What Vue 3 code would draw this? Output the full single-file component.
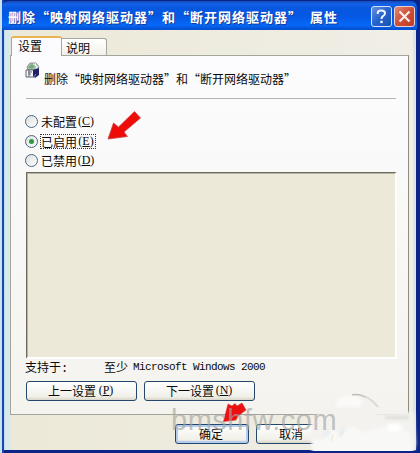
<script setup>
import { ref } from 'vue'

const selected = ref('E')
const options = [
  { label: '未配置', key: 'C' },
  { label: '已启用', key: 'E' },
  { label: '已禁用', key: 'D' },
]
</script>

<template>
  <div class="window">
    <header class="titlebar">
      <h1 class="title">删除“映射网络驱动器”和“断开网络驱动器”<span class="gap"></span>属性</h1>
      <button class="cap help" aria-label="Help">
        <svg width="21" height="21" viewBox="0 0 21 21"><path d="M6.8 8V6.2Q7 4.5 10.2 4.5Q14 4.5 14 7.2Q14 9 12 10.2Q10.5 11.2 10.5 13" fill="none" stroke="#f1f5fc" stroke-width="2" /><rect x="9.3" y="14.7" width="2.4" height="2.4" fill="#f1f5fc" /></svg>
      </button>
      <button class="cap close" aria-label="Close">
        <svg width="21" height="21" viewBox="0 0 21 21"><path d="M5.5 5.5L15.5 15.5M15.5 5.5L5.5 15.5" stroke="#f8eeea" stroke-width="2.2" /></svg>
      </button>
    </header>

    <main class="client">
      <nav class="tabs">
        <div class="tab active">设置</div>
        <div class="tab">说明</div>
      </nav>
      <section class="panel">
        <div class="policy">
          <svg class="icon" width="16" height="18" viewBox="0 0 16 18">
            <path d="M2 5L5 1L11 1L14 5L12 8H3Z" fill="#a9bdac" stroke="#8c968d" />
            <path d="M3 5L7 2L10 4L7 7Z" fill="#6fae7c" />
            <path d="M8 2L13 5M10 1L12 7" stroke="#eef5ed" />
            <path d="M1 8H9V15H1Z" fill="#f5f6f8" stroke="#5e6470" />
            <path d="M3 10H7M3 12H6M4 8V15" stroke="#646b78" />
            <path d="M8 8L14 6V13L10 16L8 14Z" fill="#20206c" />
            <path d="M9 15L11 12" stroke="#8189b7" fill="none" />
          </svg>
          <span>删除“映射网络驱动器”和“断开网络驱动器”</span>
        </div>
        <div class="rule"></div>
        <div class="radios">
          <div v-for="o in options" :key="o.key" class="radio" @click="selected = o.key">
            <span class="dot" :class="{ on: selected === o.key }"></span>
            <span class="radio-label" :class="{ focus: selected === o.key }">{{ o.label }}<span class="key">(<u>{{ o.key }}</u>)</span></span>
          </div>
        </div>
        <div class="well"></div>
        <div class="support"><span class="support-name">支持于<i>:</i></span><span>至少</span><span class="latin">Microsoft Windows 2000</span></div>
        <div class="nav-buttons">
          <button class="btn wide">上一设置<span class="key">(<u>P</u>)</span></button>
          <button class="btn wide">下一设置<span class="key">(<u>N</u>)</span></button>
        </div>
      </section>
      <footer class="actions">
        <button class="btn default">确定</button>
        <button class="btn cancel">取消</button>
      </footer>
    </main>

    <svg class="arrow first" width="36" height="32" viewBox="0 0 36 32"><path d="M1 29L6.5 13L11.5 17L27.5 1.5L33.5 8L17 22L20.5 26.5Z" fill="#ee0b08" stroke="#c94545" stroke-width=".8" /></svg>
    <svg class="arrow second" width="24" height="20" viewBox="0 0 24 20"><path d="M.5 19.5L5 2L9 4L12 1.5L14 4L19 1L23 8L15 14L13 18Z" fill="#ed1010" stroke="#d33434" stroke-width=".6" /></svg>
    <svg class="haze" width="120" height="63" viewBox="0 0 120 63">
      <defs><filter id="soft" x="-20%" y="-20%" width="140%" height="140%"><feGaussianBlur stdDeviation="1.4" /></filter></defs>
      <g filter="url(#soft)">
        <path d="M11 29Q28 23 33 14Q45 2 61 8Q73 14 76 25L114 24L116 56L113 67H12L11 45Z" fill="#f3f2ef" />
        <path d="M37 13Q45 5 58 8Q64 12 60 19Q48 18 35 19Z" fill="#fbfaf8" />
        <path d="M12 54Q15 48 22 52L31 40L40 46L51 38L63 44L86 38L98 40L110 45L113 67H12Z" fill="#f8f8f6" />
        <path d="M22 49L29 39L30 47ZM43 37L45 44L38 48Z" fill="#e6edf1" />
        <path d="M87 37Q96 33 103 39Q100 45 88 43Z" fill="#fff" />
        <path d="M85 28H109V31H85Z" fill="#dcdcd6" />
      </g>
      <path d="M52 7Q67 5 78 19" fill="none" stroke="#dedbd7" stroke-width="2" />
      <path d="M52 6.5Q59 5 65 9" fill="none" stroke="#bfbdb9" />
      <path d="M31 53L33 47M40 49L43 44" stroke="#eae4c9" />
    </svg>
    <div class="watermark">bmshfw.com</div>
  </div>
</template>

<style>
body { margin: 0; overflow: hidden; }
</style>

<style scoped>
* { box-sizing: border-box; }
.window {
  position: relative;
  width: 420px;
  height: 453px;
  padding: 1px 3px 0 2px;
  overflow: hidden;
  background: linear-gradient(90deg, #c9e2ed 2px, #1547b2 2px 4px, #0c2488 4px);
  font: 12px/16px "Noto Sans CJK SC", "Liberation Sans", sans-serif;
  color: #090909;
}
button { margin: 0; font: inherit; color: inherit; }
.titlebar {
  display: flex;
  height: 29px;
  padding: 5px 2px 0 6px;
  border-radius: 6px 6px 0 0;
  background: linear-gradient(#1549b4, #1263e8 3px, #0758df 7px, #0557e3 15px, #0668f8 24px, #0451d2 28px);
}
.title {
  flex: 1;
  margin: 0;
  font-size: 13px;
  line-height: 21px;
  letter-spacing: 1px;
  font-weight: 700;
  white-space: nowrap;
  color: #fff;
  text-shadow: 1px 1px #143d96;
}
.gap { display: inline-block; width: 8px; }
.cap {
  width: 21px;
  height: 21px;
  padding: 0;
  border: 1px solid #d5e2f7;
  border-radius: 3px;
  background: linear-gradient(135deg, #6590dd, #2563cd 50%, #1951b3);
}
.cap svg { display: block; margin: -1px; }
.close {
  margin-left: 2px;
  border-color: #edd0d0;
  background: linear-gradient(135deg, #dc8974, #cf4f36 50%, #b93d27);
}
.client {
  height: 420px;
  margin: 0 1px 0 2px;
  padding: 6px 5px 0 5px;
  border-left: 1px solid #c0dce9;
  border-right: 3px solid #dce5e5;
  background: linear-gradient(90deg, #d9e8eb 0 4px, #ece9d8 7px, #f0eee6);
}
.tabs { display: flex; align-items: flex-end; height: 19px; padding-left: 1px; }
.tab {
  width: 45px;
  height: 17px;
  padding-left: 4px;
  border: 1px solid #a3a69c;
  border-width: 1px 1px 0 0;
  border-radius: 0 3px 0 0;
  background: linear-gradient(#fff, #f2f1e9);
  line-height: 17px;
}
.tab.active {
  position: relative;
  width: 51px;
  height: 20px;
  margin-bottom: -1px;
  padding-left: 6px;
  border: 1px solid #a3a69c;
  border-top: 2px solid #e9b253;
  border-bottom: 0;
  border-radius: 3px 3px 0 0;
  background: #fcfcfe;
  line-height: 15px;
}
.panel {
  width: 399px;
  height: 360px;
  padding: 7px 11px 0 15px;
  border: 1px solid #a3a69c;
  border-right-color: #8b8c80;
  background: linear-gradient(#fcfcfe, #f4f3ee);
}
.policy { display: flex; height: 35px; }
.policy .icon { margin: -1px 3px 0 -1px; }
.policy > span { padding-top: 8px; white-space: nowrap; }
.rule { height: 1px; width: 370px; background: #b5b5b0; }
.radios { padding-top: 13px; height: 73px; }
.radio { display: flex; align-items: center; height: 19.5px; }
.dot {
  display: flex;
  align-items: center;
  justify-content: center;
  width: 13px;
  height: 13px;
  margin-left: -1px;
  border: 1px solid #496784;
  border-radius: 50%;
  background: linear-gradient(135deg, #dcdfdf, #fff);
}
.dot.on::after { content: ''; width: 5px; height: 5px; border-radius: 50%; background: #2f9840; }
.radio-label { display: flex; width: 56px; height: 15px; margin-left: 2px; padding: 0; border: 1px dotted transparent; line-height: 13px; }
.radio-label.focus { border-color: #333; }
.key { display: inline-block; width: 18px; font: 12px/13px "Liberation Serif", serif; text-align: center; white-space: nowrap; }
.key u { text-underline-offset: 1px; }
.well {
  width: 371px;
  height: 187px;
  background: #ece9d8;
  border: 1px solid #6e6b5e;
  border-right: 2px solid #fff;
  border-bottom: 2px solid #fff;
  box-shadow: inset 1px 1px #b7b3a2;
}
.support { display: flex; height: 22px; line-height: 15px; white-space: nowrap; }
.support-name { width: 79px; margin-left: -1px; }
.support i { font: 12px "Liberation Mono", monospace; }
.latin { margin-left: 5px; font: 11px/17px "Liberation Mono", monospace; letter-spacing: -.6px; }
.nav-buttons { display: flex; gap: 7px; }
.btn {
  display: flex;
  align-items: center;
  justify-content: center;
  width: 74px;
  height: 20px;
  padding: 0 0 1px;
  border: 1px solid #23486c;
  border-radius: 3px;
  background: linear-gradient(#fff, #f1f0e9 80%, #d9d5c9);
  line-height: 16px;
}
.btn.wide { width: 111px; }
.btn.wide .key { margin-left: 1px; }
.btn.default { padding-right: 2px; box-shadow: inset 0 0 0 2px #b4cdef; }
.btn.cancel { padding-right: 4px; }
.actions { display: flex; gap: 7px; padding: 9px 0 0 165px; }
.arrow { position: absolute; }
.first { left: 107px; top: 110px; }
.second { left: 223px; top: 402px; }
.haze { position: absolute; left: 300px; top: 388px; }
.watermark {
  position: absolute;
  left: 171px;
  top: 404px;
  font: 29px/32px "Liberation Sans", Arial, sans-serif;
  letter-spacing: .5px;
  color: rgba(163, 163, 163, .65);
  white-space: nowrap;
}
</style>
